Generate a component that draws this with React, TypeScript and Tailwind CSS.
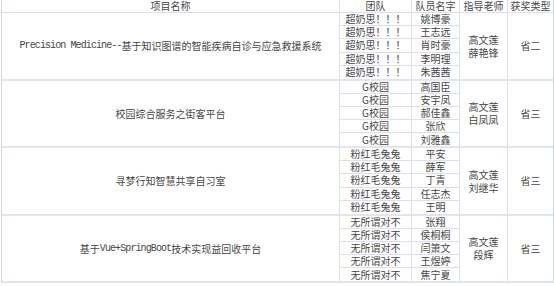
import React from 'react';

type Group = {
  name: React.ReactNode;
  team: string;
  members: string[];
  teachers: string[];
  award: string;
  h: string;
};

const Lat = ({ children }: { children: React.ReactNode }) => (
  <span className="font-['Liberation_Mono',monospace] tracking-[-0.9px]">{children}</span>
);

const groups: Group[] = [
  {
    name: (
      <>
        <Lat>Precision Medicine--</Lat>基于知识图谱的智能疾病自诊与应急救援系统
      </>
    ),
    team: '超奶思！！！',
    members: ['姚博豪', '王志远', '肖时豪', '李明理', '朱茜茜'],
    teachers: ['高文莲', '薛艳锋'],
    award: '省二',
    h: 'h-[68px]',
  },
  {
    name: '校园综合服务之街客平台',
    team: 'G校园',
    members: ['高国臣', '安宇凤', '郝佳鑫', '张欣', '刘雅鑫'],
    teachers: ['高文莲', '白凤凤'],
    award: '省三',
    h: 'h-[67px]',
  },
  {
    name: '寻梦行知智慧共享自习室',
    team: '粉红毛兔兔',
    members: ['平安', '薛军', '丁青', '任志杰', '王明'],
    teachers: ['高文莲', '刘继华'],
    award: '省三',
    h: 'h-[68px]',
  },
  {
    name: (
      <>
        基于<Lat>Vue+SpringBoot</Lat>技术实现益回收平台
      </>
    ),
    team: '无所谓对不',
    members: ['张翔', '侯桐桐', '闫箫文', '王煜婷', '焦宁夏'],
    teachers: ['高文莲', '段辉'],
    award: '省三',
    h: 'h-[67px]',
  },
];

const cols = 'grid grid-cols-[338px_72px_48px_48px_45px]';

export default function App() {
  return (
    <div className="w-[554px] h-[286px] bg-white text-[10px] leading-none text-[#464646] font-['Noto_Sans_CJK_SC',sans-serif]">
      <div className="ml-px w-[553px] border-l border-r border-[#cfd4e4]">
        <div className={`${cols} h-[13px] border-b border-[#dde0ea]`}>
          <div className="flex items-center justify-center border-r border-[#dde0ea]">项目名称</div>
          <div className="flex items-center justify-center border-r border-[#dde0ea]">团队</div>
          <div className="flex items-center justify-center border-r border-[#dde0ea]">队员名字</div>
          <div className="flex items-center justify-center border-r border-[#dde0ea]">指导老师</div>
          <div className="flex items-center justify-center">获奖类型</div>
        </div>
        {groups.map((g, i) => (
          <div key={i} className={`${cols} ${g.h} border-b-2 border-[#e2e5ee]`}>
            <div className="flex items-center justify-center border-r border-[#dde0ea]">{g.name}</div>
            <div className="grid grid-rows-5 border-r border-[#dde0ea]">
              {g.members.map((_, j) => (
                <div key={j} className={`flex items-center justify-center ${j < 4 ? 'border-b border-[#dde0ea]' : ''}`}>
                  {g.team}
                </div>
              ))}
            </div>
            <div className="grid grid-rows-5 border-r border-[#dde0ea]">
              {g.members.map((m, j) => (
                <div key={j} className={`flex items-center justify-center ${j < 4 ? 'border-b border-[#dde0ea]' : ''}`}>
                  {m}
                </div>
              ))}
            </div>
            <div className="flex flex-col items-center justify-center gap-[3px] border-r border-[#dde0ea]">
              {g.teachers.map((t) => (
                <span key={t}>{t}</span>
              ))}
            </div>
            <div className="flex items-center justify-center">{g.award}</div>
          </div>
        ))}
      </div>
    </div>
  );
}
